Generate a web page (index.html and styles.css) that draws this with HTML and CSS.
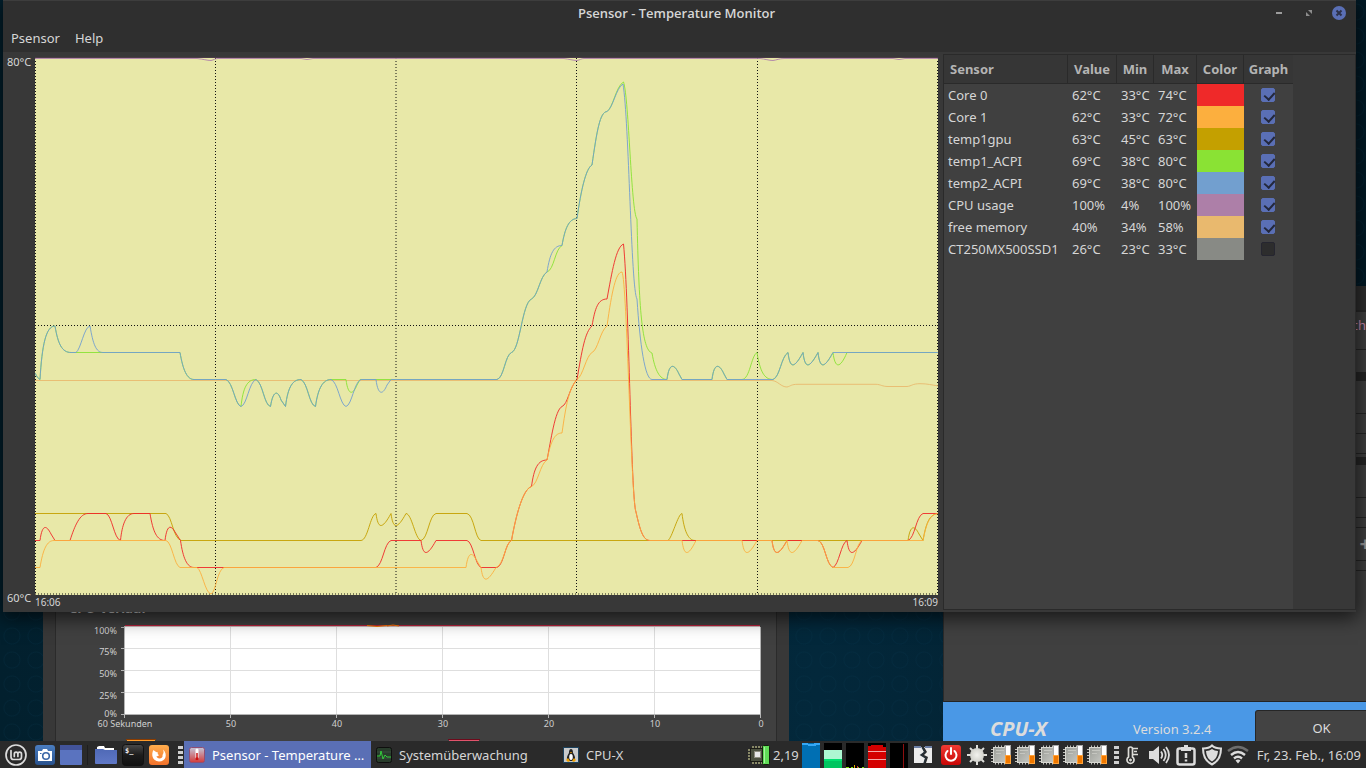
FILE: index.html
```html
<!DOCTYPE html>
<html lang="de">
<head>
<meta charset="utf-8">
<title>Psensor - Temperature Monitor</title>
<link rel="stylesheet" href="styles.css">
</head>
<body>
<svg class="defs" aria-hidden="true">
  <defs>
    <linearGradient id="gBlue" x2="0" y2="1"><stop offset="0" stop-color="#4a7dc0"/><stop offset="1" stop-color="#28518c"/></linearGradient>
    <linearGradient id="gFolder" x2="0" y2="1"><stop offset="0" stop-color="#4f69b6"/><stop offset="1" stop-color="#6078c6"/></linearGradient>
    <linearGradient id="gTerm" x2="0" y2="1"><stop offset="0" stop-color="#4a4a4a"/><stop offset=".5" stop-color="#1c1c1c"/><stop offset="1" stop-color="#111"/></linearGradient>
    <linearGradient id="gFox" x2="0" y2="1"><stop offset="0" stop-color="#ffad4d"/><stop offset="1" stop-color="#f2722c"/></linearGradient>
    <linearGradient id="gTherm" x2="0" y2="1"><stop offset="0" stop-color="#c3c6d8"/><stop offset="1" stop-color="#d23a3a"/></linearGradient>
    <linearGradient id="gPower" x2="0" y2="1"><stop offset="0" stop-color="#ef3b34"/><stop offset="1" stop-color="#c80606"/></linearGradient>
    <linearGradient id="gChip" x2="1" y2="1"><stop offset="0" stop-color="#9c9e98"/><stop offset="1" stop-color="#c6c7c2"/></linearGradient>
    <radialGradient id="gSun"><stop offset="0" stop-color="#f2f2ee"/><stop offset="1" stop-color="#d2d2cc"/></radialGradient>
    <symbol id="chip" viewBox="0 0 24 24">
      <path d="M5.500 2.500V21.500M8.500 2.500V21.500M11.500 2.500V21.500M14.500 2.500V21.500M1 6.500H18M1 9.500H18M1 12.500H18M1 15.500H18M1 18.500H18" stroke="#c3c3bd"/>
      <rect x="3.500" y="4.500" width="13" height="15" fill="url(#gChip)" stroke="#d8d8d2"/>
      <path d="M6 7.500h8M6 10.500h5" stroke="#c5c6c0"/>
      <rect x="15.500" y="2.500" width="5" height="10" fill="#fff" stroke="#aaa"/>
      <rect x="15.500" y="12.500" width="5" height="8" fill="#f07800" stroke="#ffa33a"/>
    </symbol>
  </defs>
</svg>

<main class="desktop">

  <section class="window monitor" aria-label="Systemüberwachung">
    <div class="monitor-page">
      <h2 class="monitor-heading">CPU-Verlauf</h2>
      <svg class="monitor-chart" width="720" height="118" viewBox="56 623 720 118" role="img" aria-label="CPU-Verlauf">
        <rect x="124" y="627" width="637" height="88" fill="#fff"/>
        <path d="M124 648.500H760M124 670.500H760M124 692.500H760M230.500 627V714M336.500 627V714M442.500 627V714M548.500 627V714M654.500 627V714" stroke="#dedede"/>
        <path d="M124.500 626V718M121 627.500H124M121 648.500H124M121 670.500H124M121 692.500H124M121 714.500H760.500V627M230.500 714V718M336.500 714V718M442.500 714V718M548.500 714V718M654.500 714V718M760.500 714V718" fill="none" stroke="#b4b4b4"/>
        <path d="M125 625.500H760" stroke="#b3203a"/>
        <path d="M125 626.500H760" stroke="#c9b4b4"/>
        <path d="M367 625.500q10 2 20 0M387 626q6-2 12 0" stroke="#f57900" fill="none"/>
        <g class="tick" text-anchor="end">
          <text x="117" y="634">100%</text><text x="117" y="655">75%</text><text x="117" y="677">50%</text><text x="117" y="699">25%</text><text x="117" y="717">0%</text>
        </g>
        <g class="tick" text-anchor="middle">
          <text x="125" y="727">60 Sekunden</text><text x="231" y="727">50</text><text x="337" y="727">40</text><text x="443" y="727">30</text><text x="549" y="727">20</text><text x="655" y="727">10</text><text x="761" y="727">0</text>
        </g>
        <path d="M126 739.500h30" stroke="#8a3c00"/><path d="M127 740.500h28" stroke="#ff9c2a"/>
        <path d="M448 739.500h32" stroke="#6d0a1b"/><path d="M449 740.500h30" stroke="#e0546c"/>
      </svg>
    </div>
  </section>

  <section class="window cpux" aria-label="CPU-X">
    <div class="cpux-title"></div>
    <div class="cpux-head"><span>ch</span></div>
    <div class="cpux-row tall"></div>
    <div class="cpux-band"></div>
    <div class="cpux-row mid"></div>
    <div class="cpux-row short"></div>
    <div class="cpux-row short"></div>
    <div class="cpux-band"></div>
    <div class="cpux-row mid"></div>
    <div class="cpux-row short"></div>
    <div class="cpux-row thin"></div>
    <div class="cpux-row mid"><span class="plus">+</span></div>
    <div class="cpux-row thin"></div>
    <div class="cpux-fill"></div>
    <footer class="cpux-footer">
      <strong>CPU-X</strong>
      <span>Version 3.2.4</span>
      <button type="button">OK</button>
    </footer>
  </section>

  <section class="window psensor" aria-label="Psensor - Temperature Monitor">
    <header class="titlebar">
      <h1>Psensor - Temperature Monitor</h1>
      <div class="controls">
        <button type="button" aria-label="Minimieren"><svg width="14" height="14" viewBox="0 0 14 14"><path d="M4 7h6" stroke="#9c9c9c" stroke-width="2"/></svg></button>
        <button type="button" aria-label="Maximieren"><svg width="14" height="14" viewBox="0 0 14 14"><path d="M6 4h4v4zM4 6v4h4z" fill="#8d8d8d"/></svg></button>
        <button type="button" aria-label="Schließen"><svg width="14" height="14" viewBox="0 0 14 14"><circle cx="7" cy="7" r="7" fill="#5a6fb5"/><path d="M4.500 4.500l5 5M9.500 4.500l-5 5" stroke="#2c3149" stroke-width="2"/></svg></button>
      </div>
    </header>
    <nav class="menubar"><button type="button">Psensor</button><button type="button">Help</button></nav>

    <div class="psensor-body">
      <div class="y-axis"><span>80°C</span><span>60°C</span></div>
      <svg class="plot" viewBox="35 57 903 538" preserveAspectRatio="none" role="img" aria-label="Temperaturverlauf">
        <rect x="35" y="57" width="904" height="538" fill="#e8e8a8"/>
        <g class="grid-lines">
          <path d="M35.500 58V595M215.500 58V595M396 58V595M576.500 58V595M757.500 58V595M937.500 58V595M35 325.500H939M35 594H939"/>
        </g>
        <path d="M35 57.500H939" stroke="#4b3b48"/>
        <g class="lines">
          <path stroke="#ad7fa8" d="M35 58.500H197C203 59 207 60.500 211 60.500C214 60 215 58.500 218 58.500H301Q307 60.500 313 58.500H564C569 59 573 60.500 577 60.500C580 60 581 58.500 584 58.500H760C765 59 769 60.500 773 60.500C777 60 779 58.500 784 58.500H893Q899 60.500 905 58.500H939"/>
          <path stroke="#e9b96e" d="M35 380.500H772C778 381 781 387 787 387C791 386 791 384.300 798 384.300H876C881 384.500 882 386.500 888 386.500H907C912 386 912 383.700 920 383.700C928 383.700 931 385 939 386"/>
          <path stroke="#c4a000" d="M35 513.500H166C172 516 173 538 181 540.500H361C368 540 370 515 376 513.500C378 529 382 530 391 513.500C393 529 397 530 406 513.500C412 514 415 539 421 540.500C428 539 429 515 436 513.500H467C474 515 475 539 481 540.500H668C672 538 678 514 682 513.500C684 530 688 540.500 695 540.500H908C910 526 914 524 919 534L923 540.500C926 524 929 513.500 939 513.500"/>
          <path stroke="#8ae234" d="M35 373Q37 378 40 379.500C42 345 46 326 55 326C58 344 62 352.500 71 352.500H180C183 370 187 379.500 194 379.500H226C233 382 235 405 241 406.500C243 388 247 379.500 256 379.500C263 383 264 405 270.500 406.500C273 390 278 390 281 400L285.500 406.500C288 386 293 379.500 301 379.500C308 383 309 405 315.500 406.500C318 388 323 379.500 331 379.500H346C348 396 353 395 357 385L360 379.500H497C504 378 505 355 511.500 352.500C520 350 522 303 531.500 299C538 296 540 276 547 272C554 270 555 249 562 245.500C565 228 569 218.800 577 218.500C581 190 586 168 592 165C597 130 600 112 607 111.500C613 108 616 86 623.500 82C629 98 631 212 637 219C639 310 642 350 652 353C655 371 660 379.500 667 379.500C669 363 674 363 679 374L682 379.500H712C714 363 719 363 724 374L727 379.500H742C750 379 751 356 757 352.500C760 371 764 379.500 773 379.500C780 377 781 357 788 352.500C790 369 794 369 803 352.500C805 369 809 369 818 352.500C820 369 824 369 833 352.500C835 369 840 369 847 352.500H939"/>
          <path stroke="#729fcf" d="M35 373Q37 378 40 379.500C42 345 46 326 55 326C58 344 62 352.500 71 352.500H76C81 349 84 327 90 326C93 344 96 352.500 103 352.500H180C183 370 187 379.500 194 379.500H226C233 382 235 405 241 406.500C247 405 249 382 256 379.500C263 383 264 405 270.500 406.500C273 390 278 390 281 400L285.500 406.500C288 386 293 379.500 301 379.500C308 383 309 405 315.500 406.500C318 388 323 379.500 331 379.500C338 382 340 405 346 406.500C352 405 354 382 361 379.500H376C378 396 383 395 387 385L391 379.500H497C504 378 505 355 511.500 352.500C520 350 522 303 531.500 299C538 296 540 276 547 272C550 253 554 245.500 562 245.500C565 228 569 218.800 577 218.500C581 190 586 168 592 165C597 130 600 112 607 111.500C613 108 616 88 623 84C629 120 631 290 637 299C640 345 645 379.500 652 379.500H667C669 363 674 363 679 374L682 379.500H712C714 363 719 363 724 374L727 379.500H773C780 377 781 357 788 352.500C790 369 794 369 803 352.500C805 369 809 369 818 352.500C820 369 824 369 833 352.500H939"/>
          <path stroke="#ef2929" d="M35 540.500H40C42 525 46 524 51 534L55 540.500H70C75 525 80 513.500 88 513.500H106C112 515 114 539 120.500 540.500C122 525 126 513.500 134 513.500H150C153 532 157 540.500 165 540.500C167 524 171 525 175 532L180.500 540.500C183 558 187 567.500 194 567.500H376C383 565 384 543 391 540.500H421C423 556 427 557 436 540.500H467C473 542 475 565 481 567.500H497C504 565 505 543 511.500 540.500C516 515 523 489 531.500 486.500C534 468 538 460 547 460C551 440 555 410 562 406.500C568 404 569 388 577 379.500C582 350 585 332 592 326C595 308 598 299 607 299C612 272 616 247 623.500 244C629 300 631 500 636 512C640 530 643 540.500 650 540.500H772C774 556 778 557 787 540.500H818C825 542 826 565 833 567.500C839 565 841 543 847 540.500C849 556 853 557 862 540.500H908C915 538 916 516 923 513.500H939"/>
          <path stroke="#fcaf3e" d="M35 567.500H40C43 549 47 540.500 54 540.500H166C172 542 174 565 180 567.500H197C202 570 205 593 211 594C216 592 217 570 224 567.500H466C468 552 472 551 477 561L481 567.500C483 583 487 583 496 567.500C504 565 505 543 511.500 540.500C516 515 523 489 531.500 486.500C538 484 540 464 547 460C551 440 555 433 562 433C566 405 569 388 577 379.500C583 376 586 356 592 352.500C598 350 600 331 607 326C612 290 616 272 622 272C627 280 631 500 636 512C640 530 643 540.500 650 540.500H682C684 556 688 557 696 540.500H742C744 556 748 557 757 540.500H772C774 556 778 557 787 540.500C789 556 793 557 802 540.500H818C825 542 826 565 833 567.500H848C855 566 856 543 862 540.500H923C926 524 930 513.500 939 513.500"/>
        </g>
      </svg>
      <div class="x-axis"><span>16:06</span><span>16:09</span></div>

      <div class="sensor-pane">
        <table>
          <colgroup><col class="c-name"><col class="c-value"><col class="c-min"><col class="c-max"><col class="c-color"><col class="c-graph"></colgroup>
          <thead><tr><th>Sensor</th><th>Value</th><th>Min</th><th>Max</th><th>Color</th><th>Graph</th></tr></thead>
          <tbody>
            <tr><td>Core 0</td><td>62°C</td><td>33°C</td><td>74°C</td><td class="red"></td><td><input type="checkbox" checked aria-label="Core 0"></td></tr>
            <tr><td>Core 1</td><td>62°C</td><td>33°C</td><td>72°C</td><td class="orange"></td><td><input type="checkbox" checked aria-label="Core 1"></td></tr>
            <tr><td>temp1gpu</td><td>63°C</td><td>45°C</td><td>63°C</td><td class="gold"></td><td><input type="checkbox" checked aria-label="temp1gpu"></td></tr>
            <tr><td>temp1_ACPI</td><td>69°C</td><td>38°C</td><td>80°C</td><td class="green"></td><td><input type="checkbox" checked aria-label="temp1_ACPI"></td></tr>
            <tr><td>temp2_ACPI</td><td>69°C</td><td>38°C</td><td>80°C</td><td class="blue"></td><td><input type="checkbox" checked aria-label="temp2_ACPI"></td></tr>
            <tr><td>CPU usage</td><td>100%</td><td>4%</td><td>100%</td><td class="purple"></td><td><input type="checkbox" checked aria-label="CPU usage"></td></tr>
            <tr><td>free memory</td><td>40%</td><td>34%</td><td>58%</td><td class="sand"></td><td><input type="checkbox" checked aria-label="free memory"></td></tr>
            <tr><td>CT250MX500SSD1</td><td>26°C</td><td>23°C</td><td>33°C</td><td class="grey"></td><td><input type="checkbox" aria-label="CT250MX500SSD1"></td></tr>
          </tbody>
        </table>
      </div>
    </div>
  </section>
</main>

<footer class="panel">
  <div class="launchers">
    <button type="button" class="menu" aria-label="Menü"><svg width="24" height="24" viewBox="0 0 24 24" fill="none" stroke="#dcdcdc" stroke-linecap="round"><circle cx="12" cy="12" r="10" stroke-width="1.700"/><path d="M7 7.500V14a2.500 2.500 0 0 0 2.500 2.500H15A2.500 2.500 0 0 0 17.500 14V11a1.800 1.800 0 0 0-3.600 0v2.500M13.900 11a1.800 1.800 0 0 0-3.600 0v2.500" stroke-width="1.700"/></svg></button>
    <button type="button" aria-label="Bildschirmfoto"><svg width="20" height="20" viewBox="0 0 20 20"><rect width="20" height="20" rx="3" fill="url(#gBlue)"/><path d="M3 6h4l1-2h4l1 2h4v10H3z" fill="#fff"/><circle cx="11" cy="11" r="3.300" fill="#fff" stroke="#3a66a6" stroke-width="1.600"/><path d="M5 8.500h1.500" stroke="#3a66a6"/></svg></button>
    <button type="button" aria-label="Schreibtisch"><svg width="22" height="20" viewBox="0 0 22 20"><rect width="22" height="20" rx="1" fill="#5a73bf"/><rect width="22" height="5" fill="#42539a"/></svg></button>
    <i class="rule"></i>
    <button type="button" aria-label="Dateien"><svg width="22" height="20" viewBox="0 0 22 20"><path d="M2 4V2l2-1h5l1 2h9v3H2z" fill="#fff"/><path d="M0 4h8l2 1h12v13a1 1 0 0 1-1 1H1a1 1 0 0 1-1-1z" fill="url(#gFolder)"/></svg></button>
    <button type="button" aria-label="Terminal"><svg width="22" height="22" viewBox="0 0 22 22"><rect x=".5" y=".5" width="21" height="21" rx="3" fill="url(#gTerm)" stroke="#111"/><text x="3" y="9" class="prompt">$_</text></svg></button>
    <button type="button" aria-label="Firefox"><svg width="20" height="20" viewBox="0 0 20 20"><rect width="20" height="20" rx="3" fill="url(#gFox)"/><path d="M4.500 5C2 9 3 16 10 16.500 17 16.500 19 9 14 4.500c1 2.500.5 4-.5 5.500.5 2-1 3.500-3 3.500-1.500 0-3-1-3-2.500 1 .5 2 0 2.500-1-1.500-.5-1.500-1.500-1-2.500C7.500 7.500 6 6.500 4.500 5z" fill="#fff"/></svg></button>
    <svg class="handle" width="5" height="20" viewBox="0 0 5 20" aria-hidden="true"><path d="M0 1h5v3H0zM0 6h5v3H0zM0 11h5v3H0zM0 16h5v3H0z" fill="#cfcfcf"/></svg>
  </div>
  <div class="tasks">
    <button type="button" class="task active"><svg width="16" height="16" viewBox="0 0 16 16"><rect x=".5" y=".5" width="15" height="15" rx="2" fill="url(#gTherm)" stroke="#914e72"/><path d="M8 3v9" stroke="#fff" stroke-width="3" stroke-linecap="round"/><path d="M8 6v6" stroke="#c11" stroke-width="1.500"/><circle cx="8" cy="12" r="1.800" fill="#c11"/></svg><span>Psensor - Temperature …</span></button>
    <button type="button" class="task"><svg width="16" height="16" viewBox="0 0 16 16"><rect x=".5" y=".5" width="15" height="15" rx="2" fill="#283c2b" stroke="#0e0e0e"/><path d="M1 5h14M1 11h14" stroke="#4b5c4d" stroke-opacity=".6"/><path d="M1 9h3l1-5 2 8 2-4 2 2h4" fill="none" stroke="#33cc3b"/></svg><span>Systemüberwachung</span></button>
    <button type="button" class="task"><svg width="16" height="16" viewBox="0 0 16 16"><rect x=".5" y=".5" width="15" height="15" fill="#c9cacb" stroke="#1d425d"/><path d="M8 2c-2 0-2 3-2 4-2 3-3 6-1 8h6c2-2 1-5-1-8 0-1 0-4-2-4z" fill="#222"/><ellipse cx="8" cy="10" rx="1.800" ry="3" fill="#fff"/><path d="M7 5h2l-1 1.500z" fill="#f0a000"/><path d="M3 13l2-2 2 3-2 1zM13 13l-2-2-2 3 2 1z" fill="#f0a000"/></svg><span>CPU-X</span></button>
  </div>
  <div class="tray">
    <span class="load"><svg width="24" height="20" viewBox="0 0 24 20"><path d="M6 1v18M9 1v18M12 1v18M15 1v18M1 5h18M1 8h18M1 11h18M1 14h18" stroke="#e7e7a4"/><rect x="3.500" y="3.500" width="14" height="13" fill="#4c5140" stroke="#1b1b14"/><rect x="7.500" y="6.500" width="6" height="6" fill="#e8e8e8" stroke="#8e8e80"/><rect x="15.500" y=".5" width="7" height="19" rx="1" fill="#5fdc57" stroke="#15200f"/><path d="M17.500 2v16" stroke="#a6f59e"/></svg>2,19</span>
    <svg class="graphs" width="106" height="26" viewBox="0 0 106 26" role="img" aria-label="Systemlast">
      <path d="M22 1h18v25H22zM44 1h18v25H44zM66 1h18v25H66zM88 1h18v25H88z" fill="#000"/>
      <path d="M0 1h18v25H0z" fill="#006fb3"/><path d="M0 1h6v1h6V1h6v2h-4v1H6V3H0z" fill="#35a7f5"/>
      <path d="M22 8h18v9H22z" fill="#adf7d2"/><path d="M22 17h18v2H22z" fill="#00e070"/><path d="M22 19h18v7H22z" fill="#00c560"/>
      <path d="M44 25.500h3M49 25.500h2M56 25.500h1M60 25.500h2" stroke="#7bdc00"/><path d="M52.500 23v3" stroke="#e6a800"/><path d="M55.500 24v2" stroke="#c33"/>
      <path d="M66 4h3V3h12v2h3v21H66z" fill="#d40000"/><path d="M66 9.500h18M66 17.500h18" stroke="#f3a9a9"/>
      <path d="M101.500 2v24" stroke="#8e0f0f"/>
    </svg>
    <button type="button" class="slot-a" aria-label="Anwendung"><svg width="18" height="18" viewBox="0 0 18 18"><path d="M0 1h8l2 5-3 3 4 3-1 5H0zM10 1h8v16h-6l2-6-4-2 3-3z" fill="#ececec"/><path d="M0 1h7M11 1h7" stroke="#6c7fa5" stroke-width="2"/><path d="M8 1l3 5-4 3 5 3-2 5" stroke="#28323a" fill="none" stroke-width="1.500"/></svg></button>
    <button type="button" class="slot-b" aria-label="Ausschalten"><svg width="20" height="20" viewBox="0 0 20 20"><rect width="20" height="20" rx="3" fill="url(#gPower)"/><path d="M6.500 6a5.500 5.500 0 1 0 7 0" fill="none" stroke="#fff" stroke-width="2" stroke-linecap="round"/><path d="M10 3v6" stroke="#fff" stroke-width="2" stroke-linecap="round"/></svg></button>
    <button type="button" class="slot-b" aria-label="Helligkeit"><svg width="22" height="22" viewBox="0 0 22 22"><path d="M11 1v20M1 11h20M4 4l14 14M18 4L4 18" stroke="#dededa" stroke-width="2"/><circle cx="11" cy="11" r="7" fill="url(#gSun)"/></svg></button>
    <span class="chips"><svg width="24" height="24"><use href="#chip"/></svg><svg width="24" height="24"><use href="#chip"/></svg><svg width="24" height="24"><use href="#chip"/></svg><svg width="24" height="24"><use href="#chip"/></svg><svg width="24" height="24"><use href="#chip"/></svg></span>
    <svg width="5" height="20" viewBox="0 0 5 20" aria-hidden="true"><path d="M0 1h5v3H0zM0 6h5v3H0zM0 11h5v3H0zM0 16h5v3H0z" fill="#cfcfcf"/></svg>
    <button type="button" class="slot-b" aria-label="Temperatur"><svg width="16" height="20" viewBox="0 0 16 20" fill="none" stroke="#dcdcd8"><path d="M4.500 12V4a2 2 0 0 1 4 0v8a3.500 3.500 0 1 1-4 0z" stroke-width="1.700"/><path d="M9 3.500h5M10 6.500h3M9 9.500h5" stroke-width="1.500"/><circle cx="6.500" cy="15" r="1" fill="#dcdcd8"/></svg></button>
    <button type="button" class="slot-c" aria-label="Lautstärke"><svg width="22" height="22" viewBox="0 0 22 22"><path d="M1 7h4l6-5v18l-6-5H1z" fill="#dcdcdc"/><path d="M13 7.500q2.500 3.500 0 7M15.500 5q4.500 6 0 12M18 3q6 8 0 16" stroke="#dcdcdc" stroke-width="1.800" fill="none"/></svg></button>
    <button type="button" class="slot-b" aria-label="Meldungen"><svg width="20" height="22" viewBox="0 0 20 22"><rect x="1.500" y="4.500" width="17" height="16" rx="2" fill="none" stroke="#dcdcdc" stroke-width="2.500"/><path d="M5 3h3V1h4v2h3v4H5z" fill="#dcdcdc"/><path d="M10 9v5M10 15.500v2" stroke="#dcdcdc" stroke-width="2.500"/></svg></button>
    <button type="button" class="slot-b" aria-label="Aktualisierung"><svg width="22" height="22" viewBox="0 0 22 22"><path d="M11 1.500Q14 4.500 20 4.500C20 13 17 17.500 11 20.500 5 17.500 2 13 2 4.500Q8 4.500 11 1.500z" fill="none" stroke="#dcdcdc" stroke-width="2"/><path d="M11 5q2.500 2 6 2C16.500 12 15 15 11 17.500 7 15 5.500 12 5 7q3.500 0 6-2z" fill="#dcdcdc"/></svg></button>
    <button type="button" class="slot-b" aria-label="WLAN"><svg width="22" height="20" viewBox="0 0 22 20" fill="none" stroke-width="2.400"><path d="M1 6Q11-2 21 6" stroke="#6e6e6e"/><path d="M4 10q7-6 14 0M7 13.500q4-3.500 8 0" stroke="#dcdcdc"/><path d="M8.500 15.500L11 18.500l2.500-3Q11 13.500 8.500 15.500z" fill="#dcdcdc"/></svg></button>
    <time>Fr, 23. Feb., 16:09</time>
  </div>
</footer>
</body>
</html>
```
FILE: styles.css
```css
* { box-sizing: border-box; }

body {
  margin: 0;
  height: 100vh;
  overflow: hidden;
  display: flex;
  flex-direction: column;
  background: #03202f;
  color: #d6d6d6;
  font: 13px/16px "Noto Sans", "Open Sans", sans-serif;
}

button {
  margin: 0;
  padding: 0;
  border: 0;
  background: none;
  color: inherit;
  font: inherit;
}

svg { display: block; flex: none; }
.defs { position: absolute; width: 0; height: 0; }

/* Desktop */
.desktop {
  position: relative;
  flex: 1;
  min-height: 0;
  overflow: hidden;
  background:
    radial-gradient(circle at 12px 12px, transparent 7px, rgba(10, 60, 85, .2) 8px, transparent 9px) 0 0 / 24px 24px,
    linear-gradient(90deg, #02202e, #03283b 60%, #021a26);
}

.window { position: absolute; background: #383838; }

/* System monitor */
.monitor { left: 43px; right: calc(100% - 789px); top: 560px; bottom: 0; padding: 0 12px; }
.monitor-page {
  height: 100%;
  padding-top: 40px;
  background: #404040;
  border: solid #2b2b2b;
  border-width: 0 1px;
}
.monitor-heading { margin: 0 0 7px 13px; font-size: 13px; line-height: 16px; }
.tick { fill: #cfcfcf; font-size: 9px; }

/* CPU-X */
.cpux {
  left: 943px;
  right: -24px;
  top: 286px;
  bottom: 0;
  display: flex;
  flex-direction: column;
  border-left: 1px solid #2a2a2a;
  background: #404040;
}
.cpux-title { height: 24px; background: #2f2f2f; }
.cpux-head, .cpux-row { border-bottom: 1px solid #262626; }
.cpux-head { height: 40px; padding: 5px 24px; text-align: right; color: #c98bb0; border-top: 2px solid #292929; }
.cpux-row { text-align: right; }
.tall { height: 23px; }
.mid { height: 33px; }
.short { height: 20px; }
.short + .cpux-band { margin-top: 3px; }
.thin { height: 10px; }
.cpux-band { height: 8px; background: #262626; }
.plus { padding: 0 19px; font-size: 20px; line-height: 32px; font-weight: 700; color: #999; }
.cpux-fill { flex: 1; border-bottom: 1px solid #242424; }
.cpux-footer {
  height: 39px;
  margin-left: -1px;
  padding: 8px 0 0 47px;
  display: grid;
  grid-template-columns: 143px 122px 1fr;
  grid-template-rows: 31px;
  background: #4a98e6;
  color: #dcdcdc;
}
.cpux-footer strong { padding-top: 7px; font: italic 700 20px/24px "Noto Sans", sans-serif; }
.cpux-footer span { padding-top: 11px; }
.cpux-footer button {
  padding: 3px 2px 0 0;
  background: #434343;
  border: 1px solid #262626;
  border-bottom: 0;
  border-radius: 3px 0 0;
}

/* Psensor */
.psensor {
  left: 3px;
  right: 10px;
  top: 0;
  bottom: 129px;
  display: flex;
  flex-direction: column;
  box-shadow: 0 4px 18px 2px rgba(0, 0, 0, .65);
}
.titlebar {
  height: 25px;
  padding: 0 10px 0 110px;
  display: grid;
  grid-template-columns: 1fr 74px;
  align-items: center;
  background: #2f2f2f;
  border-top: 1px solid #3d3d3d;
}
.titlebar h1 {
  margin: 0;
  padding-right: 32px;
  text-align: center;
  font: 600 13px/16px "Open Sans", "Noto Sans", sans-serif;
}
.controls { display: flex; justify-content: space-between; }
.menubar { height: 27px; padding: 4px 8px 6px; display: flex; gap: 15px; background: #2f2f2f; }

.psensor-body {
  flex: 1;
  min-height: 0;
  padding-top: 2px;
  display: grid;
  grid-template-columns: 32px 1fr 418px;
  grid-template-rows: 1fr 17px;
}
.y-axis {
  grid-area: 1 / 1 / 3 / 2;
  padding: 0 3px 6px 4px;
  display: flex;
  flex-direction: column;
  justify-content: space-between;
  font-size: 11px;
  line-height: 16px;
}
.plot { width: 100%; height: 100%; padding-top: 3px; min-height: 0; }
.x-axis {
  grid-area: 2 / 2;
  display: flex;
  justify-content: space-between;
  font-size: 10px;
  line-height: 14px;
}
.grid-lines { stroke: #111; stroke-dasharray: 1 2; fill: none; }
.lines { fill: none; stroke-opacity: .9; }

.sensor-pane {
  grid-area: 1 / 3 / 3 / 4;
  margin: 0 0 2px 5px;
  display: flex;
  border: 1px solid #2a2a2a;
  background: linear-gradient(90deg, #404040 349px, #383838 349px);
}
table {
  width: 349px;
  flex: none;
  align-self: flex-start;
  table-layout: fixed;
  border-collapse: separate;
  border-spacing: 0;
}
.c-name { width: 124px; }
.c-value { width: 49px; }
.c-min { width: 37px; }
.c-max { width: 43px; }
.c-color { width: 47px; }
.c-graph { width: 49px; }
th {
  height: 29px;
  padding: 0;
  text-align: center;
  color: #b4b4b4;
  background: #363636;
  border-right: 1px solid #2a2a2a;
  border-bottom: 1px solid #2a2a2a;
}
th:first-child { padding-left: 6px; text-align: left; }
th:last-child { border-right: 0; }
td { height: 22px; padding: 0 0 0 4px; white-space: nowrap; }
td:last-child { padding: 0 2px 0 0; }
.red { background: #ef2929; }
.orange { background: #fcaf3e; }
.gold { background: #c4a000; }
.green { background: #8ae234; }
.blue { background: #729fcf; }
.purple { background: #ad7fa8; }
.sand { background: #e9b96e; }
.grey { background: #888a85; }

input[type="checkbox"] {
  appearance: none;
  display: block;
  width: 14px;
  height: 14px;
  margin: 0 auto;
  border: 1px solid #262630;
  border-radius: 2px;
  background: #2d2d2d;
}
input[type="checkbox"]:checked { border-color: #5a6fb5; background: #5a6fb5; }
input[type="checkbox"]:checked::before {
  content: "";
  display: block;
  width: 5px;
  height: 8px;
  margin: 1px 0 0 4px;
  border: solid #23283c;
  border-width: 0 2px 2px 0;
  transform: rotate(42deg);
}

/* Panel */
.panel {
  height: 27px;
  display: flex;
  align-items: stretch;
  background: #2a2a2a;
}
.launchers, .tray { display: flex; align-items: center; flex: none; }
.launchers { gap: 5px; padding: 0 1px 0 4px; }
.launchers .menu { margin-right: 2px; }
.rule { width: 1px; height: 20px; background: #1e1e1e; }
.rule + button { margin-left: 2px; }
.handle { margin-left: 4px; }
.prompt { fill: #eee; font: 700 7px "DejaVu Sans Mono", monospace; }
.tasks { flex: 1; min-width: 0; display: flex; }
.task {
  width: 187px;
  padding: 0 4px;
  display: flex;
  align-items: center;
  gap: 7px;
  text-align: left;
  white-space: nowrap;
}
.task svg { margin-left: 1px; }
.task.active { background: #5a6fb5; color: #fff; }
.tray { padding-right: 5px; }
.load { width: 55px; display: flex; align-items: center; gap: 2px; }
.graphs { width: 106px; }
.slot-a { width: 30px; display: grid; place-items: center; }
.slot-b { width: 26px; display: grid; place-items: center; }
.slot-c { width: 28px; display: grid; place-items: center; }
.chips { display: flex; margin-right: 4px; }
time { width: 110px; text-align: right; white-space: nowrap; }
```
